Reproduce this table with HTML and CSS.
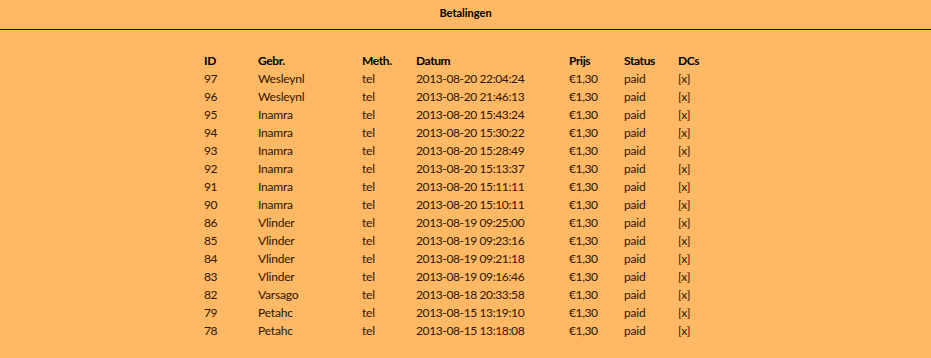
FILE: index.html
```html
<!DOCTYPE html>
<html>
<head>
<meta charset="utf-8">
<link rel="stylesheet" href="styles.css">
</head>
<body>
<header class="topbar"><h1 class="title">Betalingen</h1></header>
<main class="content">
<table class="payments">
<colgroup>
<col class="c-id"><col class="c-user"><col class="c-meth"><col class="c-date"><col class="c-price"><col class="c-status"><col class="c-dc">
</colgroup>
<thead>
<tr><th>ID</th><th>Gebr.</th><th>Meth.</th><th>Datum</th><th>Prijs</th><th>Status</th><th>DCs</th></tr>
</thead>
<tbody>
<tr><td class="num">97</td><td>Wesleynl</td><td>tel</td><td class="num">2013-08-20 22:04:24</td><td class="num">€1,30</td><td>paid</td><td>[x]</td></tr>
<tr><td class="num">96</td><td>Wesleynl</td><td>tel</td><td class="num">2013-08-20 21:46:13</td><td class="num">€1,30</td><td>paid</td><td>[x]</td></tr>
<tr><td class="num">95</td><td>Inamra</td><td>tel</td><td class="num">2013-08-20 15:43:24</td><td class="num">€1,30</td><td>paid</td><td>[x]</td></tr>
<tr><td class="num">94</td><td>Inamra</td><td>tel</td><td class="num">2013-08-20 15:30:22</td><td class="num">€1,30</td><td>paid</td><td>[x]</td></tr>
<tr><td class="num">93</td><td>Inamra</td><td>tel</td><td class="num">2013-08-20 15:28:49</td><td class="num">€1,30</td><td>paid</td><td>[x]</td></tr>
<tr><td class="num">92</td><td>Inamra</td><td>tel</td><td class="num">2013-08-20 15:13:37</td><td class="num">€1,30</td><td>paid</td><td>[x]</td></tr>
<tr><td class="num">91</td><td>Inamra</td><td>tel</td><td class="num">2013-08-20 15:11:11</td><td class="num">€1,30</td><td>paid</td><td>[x]</td></tr>
<tr><td class="num">90</td><td>Inamra</td><td>tel</td><td class="num">2013-08-20 15:10:11</td><td class="num">€1,30</td><td>paid</td><td>[x]</td></tr>
<tr><td class="num">86</td><td>Vlinder</td><td>tel</td><td class="num">2013-08-19 09:25:00</td><td class="num">€1,30</td><td>paid</td><td>[x]</td></tr>
<tr><td class="num">85</td><td>Vlinder</td><td>tel</td><td class="num">2013-08-19 09:23:16</td><td class="num">€1,30</td><td>paid</td><td>[x]</td></tr>
<tr><td class="num">84</td><td>Vlinder</td><td>tel</td><td class="num">2013-08-19 09:21:18</td><td class="num">€1,30</td><td>paid</td><td>[x]</td></tr>
<tr><td class="num">83</td><td>Vlinder</td><td>tel</td><td class="num">2013-08-19 09:16:46</td><td class="num">€1,30</td><td>paid</td><td>[x]</td></tr>
<tr><td class="num">82</td><td>Varsago</td><td>tel</td><td class="num">2013-08-18 20:33:58</td><td class="num">€1,30</td><td>paid</td><td>[x]</td></tr>
<tr><td class="num">79</td><td>Petahc</td><td>tel</td><td class="num">2013-08-15 13:19:10</td><td class="num">€1,30</td><td>paid</td><td>[x]</td></tr>
<tr><td class="num">78</td><td>Petahc</td><td>tel</td><td class="num">2013-08-15 13:18:08</td><td class="num">€1,30</td><td>paid</td><td>[x]</td></tr>
</tbody>
</table>
</main>
</body>
</html>
```
FILE: styles.css
```css
html, body {
  margin: 0;
  padding: 0;
  background: #ffb864;
  font-family: Lato, "Open Sans", sans-serif;
  color: #2e1500;
}
.topbar {
  height: 29px;
  border-bottom: 1px solid #000;
  display: flex;
  justify-content: center;
  align-items: flex-start;
}
.title {
  margin: 6px 0 0;
  font-size: 11px;
  font-weight: bold;
  color: #000;
  line-height: 14px;
}
.content {
  padding-top: 22px;
}
.payments {
  margin: 0 auto;
  width: 531px;
  table-layout: fixed;
  border-collapse: collapse;
  font-size: 12px;
}
.payments th, .payments td {
  padding: 0 4px;
  height: 18px;
  line-height: 18px;
  text-align: left;
  white-space: nowrap;
  letter-spacing: -0.2px;
}
.payments th {
  font-weight: bold;
  color: #000;
  letter-spacing: -0.4px;
}
.payments td.num {
  letter-spacing: -0.38px;
}
.c-id { width: 54px; }
.c-user { width: 104px; }
.c-meth { width: 54px; }
.c-date { width: 153px; }
.c-price { width: 55px; }
.c-status { width: 54px; }
.c-dc { width: 57px; }
```
